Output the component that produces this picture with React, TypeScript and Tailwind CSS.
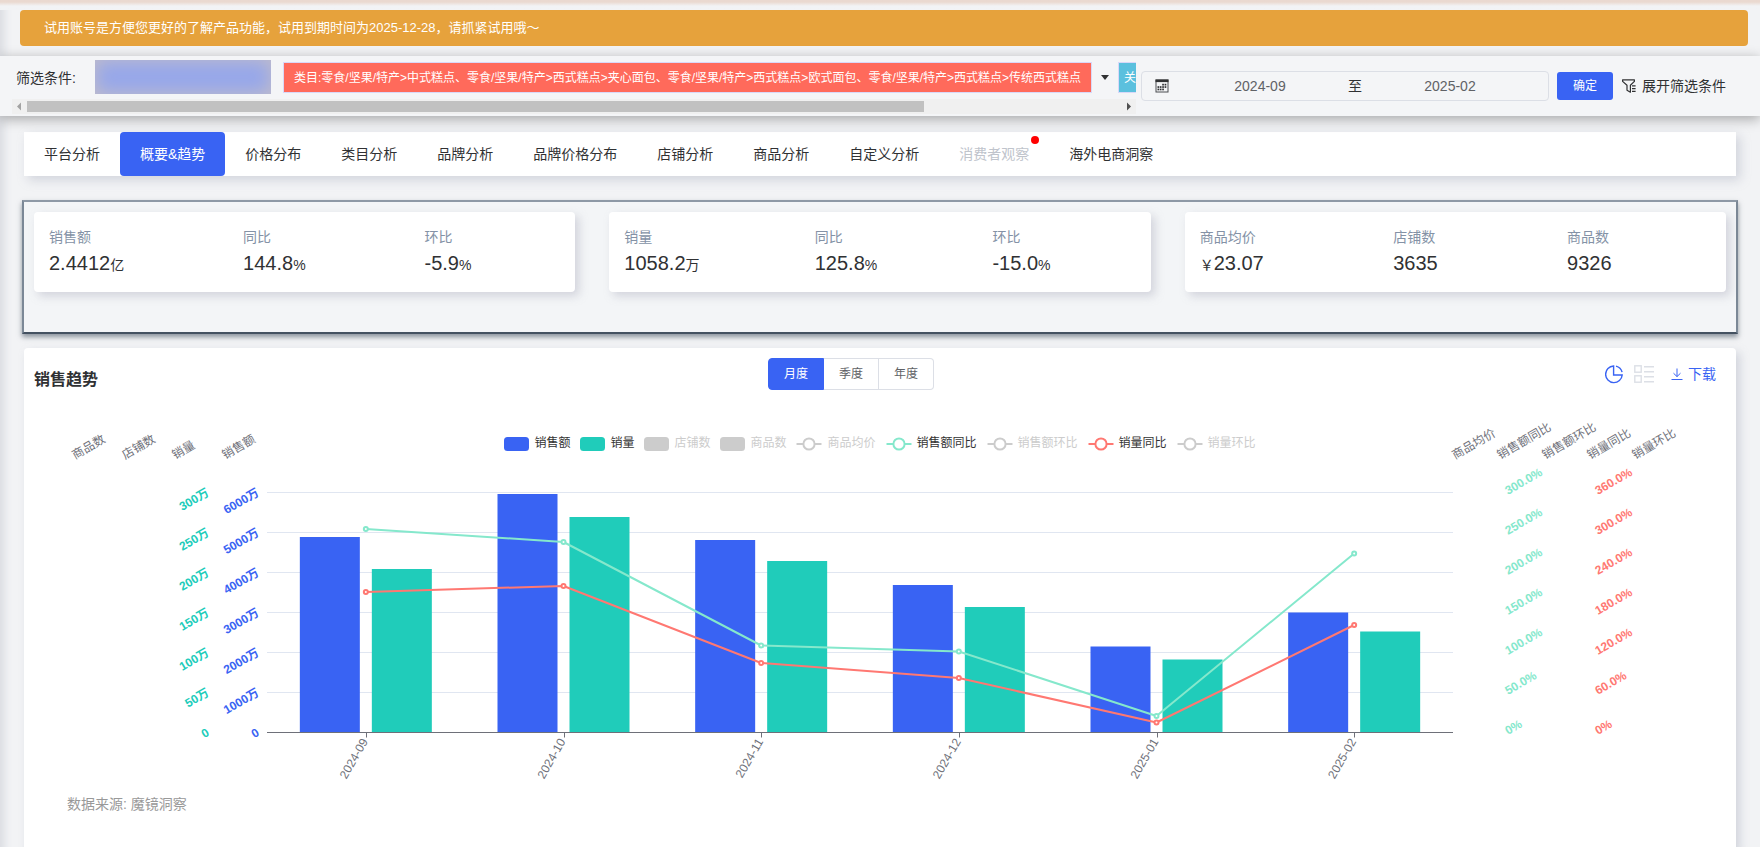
import React, { useState } from "react";

const BLUE = "#3963f3";
const TEAL = "#20ccba";
const MINT = "#85e8cc";
const CORAL = "#ff7872";

const tabs = [
  "平台分析",
  "概要&趋势",
  "价格分布",
  "类目分析",
  "品牌分析",
  "品牌价格分布",
  "店铺分析",
  "商品分析",
  "自定义分析",
  "消费者观察",
  "海外电商洞察",
];

type Metric = { label: string; prefix?: string; value: string; unit?: string };

const metricCards: Metric[][] = [
  [
    { label: "销售额", value: "2.4412", unit: "亿" },
    { label: "同比", value: "144.8", unit: "%" },
    { label: "环比", value: "-5.9", unit: "%" },
  ],
  [
    { label: "销量", value: "1058.2", unit: "万" },
    { label: "同比", value: "125.8", unit: "%" },
    { label: "环比", value: "-15.0", unit: "%" },
  ],
  [
    { label: "商品均价", prefix: "￥", value: "23.07" },
    { label: "店铺数", value: "3635" },
    { label: "商品数", value: "9326" },
  ],
];

const legend = [
  { name: "销售额", kind: "bar", color: BLUE, on: true },
  { name: "销量", kind: "bar", color: TEAL, on: true },
  { name: "店铺数", kind: "bar", color: "#ccc", on: false },
  { name: "商品数", kind: "bar", color: "#ccc", on: false },
  { name: "商品均价", kind: "line", color: "#ccc", on: false },
  { name: "销售额同比", kind: "line", color: MINT, on: true },
  { name: "销售额环比", kind: "line", color: "#ccc", on: false },
  { name: "销量同比", kind: "line", color: CORAL, on: true },
  { name: "销量环比", kind: "line", color: "#ccc", on: false },
];

function Banner() {
  return (
    <div className="mr-3 ml-5 flex h-9 items-center rounded bg-[#e6a23c] px-6 text-[13px] text-white">
      试用账号是方便您更好的了解产品功能，试用到期时间为2025-12-28，请抓紧试用哦～
    </div>
  );
}

function CalendarIcon() {
  return (
    <svg viewBox="0 0 14 14" className="h-[14px] w-[14px] shrink-0" aria-hidden="true">
      <rect x="1" y="1" width="12" height="12" fill="none" stroke="#4a4c50" strokeWidth="1" />
      <rect x="0.5" y="0.5" width="13" height="2.6" fill="#303133" />
      <g fill="#303133">
        <rect x="7.2" y="4.8" width="1.7" height="1.7" />
        <rect x="9.6" y="4.8" width="1.7" height="1.7" />
        <rect x="2.5" y="7.2" width="1.7" height="1.7" />
        <rect x="4.8" y="7.2" width="1.7" height="1.7" />
        <rect x="7.2" y="7.2" width="1.7" height="1.7" />
        <rect x="9.6" y="7.2" width="1.7" height="1.7" />
        <rect x="2.5" y="9.6" width="1.7" height="1.7" />
        <rect x="4.8" y="9.6" width="1.7" height="1.7" />
        <rect x="7.2" y="9.6" width="1.7" height="1.7" />
      </g>
    </svg>
  );
}

function FilterIcon() {
  return (
    <svg viewBox="0 0 14 14" className="h-[14px] w-[14px]" fill="none" stroke="#303133" strokeWidth="1.2" aria-hidden="true">
      <path d="M0.6 0.8H12.4V2.4L8.4 6.2V13.2L5 11.2V6.2L0.6 2.4Z" strokeLinejoin="round" />
      <path d="M10 6.8H13.6M10 9.6H13.6M10 12.4H13.6" />
    </svg>
  );
}

function FilterBar() {
  return (
    <div className="relative z-10 mt-[10px] flex h-[60px] items-center bg-[#f4f5f7] pr-[34px] shadow-[0_3px_12px_rgba(0,0,0,0.32)]">
      <div className="ml-3 h-full min-w-0 flex-1 overflow-hidden pt-1">
        <div className="flex h-[35px] items-center whitespace-nowrap">
          <span className="ml-1 w-[79px] shrink-0 text-sm text-[#303133]">筛选条件:</span>
          <div className="h-[34px] w-44 shrink-0 self-start bg-[#96a7eb] shadow-[inset_0_0_18px_1px_#c2bdc9]" />
          <div className="ml-3 flex h-[31px] shrink-0 items-center border border-[#d9d8f8] bg-[#ff6a5b] px-[10px] text-xs text-white">
            类目:零食/坚果/特产&gt;中式糕点、零食/坚果/特产&gt;西式糕点&gt;夹心面包、零食/坚果/特产&gt;西式糕点&gt;欧式面包、零食/坚果/特产&gt;西式糕点&gt;传统西式糕点
          </div>
          <button type="button" aria-label="展开类目" className="flex w-[26px] shrink-0 justify-center">
            <svg viewBox="0 0 8 5" className="h-[5px] w-2" aria-hidden="true">
              <path d="M0 0H8L4 5Z" fill="#303133" />
            </svg>
          </button>
          <div className="flex h-[31px] w-[120px] shrink-0 items-center border border-[#d9d8f8] bg-[#5bc0de] px-[5px] text-xs text-white">
            关
          </div>
        </div>
        <div className="mt-1 flex h-[15px] items-center bg-[#f0f0f0]">
          <svg viewBox="0 0 15 15" className="h-[15px] w-[15px] shrink-0" aria-hidden="true">
            <path d="M9 3.5V11.5L5 7.5Z" fill="#a3a3a3" />
          </svg>
          <div className="flex h-[11px] flex-1">
            <div className="w-[82%] bg-[#c1c1c1]" />
          </div>
          <svg viewBox="0 0 15 15" className="h-[15px] w-[15px] shrink-0" aria-hidden="true">
            <path d="M6 3.5V11.5L10 7.5Z" fill="#505050" />
          </svg>
        </div>
      </div>
      <div className="ml-[5px] flex h-[30px] w-[408px] items-center rounded border border-[#dcdfe6] pr-[15px] pl-[13px] text-sm">
        <CalendarIcon />
        <input
          aria-label="开始月份"
          defaultValue="2024-09"
          className="ml-2 h-7 min-w-0 flex-1 bg-transparent text-center text-[#606266] outline-none"
        />
        <span className="w-6 text-center text-[#303133]">至</span>
        <input
          aria-label="结束月份"
          defaultValue="2025-02"
          className="h-7 min-w-0 flex-1 bg-transparent text-center text-[#606266] outline-none"
        />
      </div>
      <button type="button" className="ml-2 h-7 w-14 rounded-[3px] bg-[#3963f3] text-xs text-white">
        确定
      </button>
      <button type="button" className="ml-[9px] flex items-center gap-[6px] text-sm text-[#303133]">
        <FilterIcon />
        展开筛选条件
      </button>
    </div>
  );
}

function TabBar() {
  const [active, setActive] = useState(1);
  return (
    <nav className="mx-6 mt-4 flex h-11 bg-white text-sm shadow-[4px_4px_10px_rgba(150,155,175,0.35)]">
      {tabs.map((name, i) => {
        const disabled = name === "消费者观察";
        const tone =
          i === active
            ? "rounded bg-[#3963f3] text-white"
            : disabled
              ? "text-[#c0c4cc]"
              : "text-[#303133]";
        return (
          <button
            key={name}
            type="button"
            disabled={disabled}
            onClick={() => setActive(i)}
            className={`relative px-5 whitespace-nowrap ${tone}`}
          >
            {name}
            {disabled && <span className="absolute top-1 right-[10px] h-2 w-2 rounded-full bg-[#ff0000]" />}
          </button>
        );
      })}
    </nav>
  );
}

function Metrics() {
  return (
    <section className="mx-[22px] mt-6 border-2 border-x-[#7b8896] border-t-[#8e99a6] border-b-[#445261] bg-[#f3f5f7] px-[10px] pt-[10px] pb-10 shadow-[0_3px_5px_rgba(68,82,97,0.6)]">
      <div className="grid grid-cols-3 gap-[34px]">
        {metricCards.map((card, i) => (
          <div key={i} className="flex h-20 rounded bg-white pt-4 shadow-[4px_4px_10px_rgba(150,150,170,0.35)]">
            {card.map((m) => (
              <div key={m.label} className="flex-auto px-[15px]">
                <div className="text-sm leading-[18px] text-[#8492a6]">{m.label}</div>
                <div className="mt-[3px] text-xl leading-7 whitespace-nowrap text-[#303133]">
                  {m.prefix && <span className="text-sm">{m.prefix}</span>}
                  {m.value}
                  {m.unit && <span className="text-sm">{m.unit}</span>}
                </div>
              </div>
            ))}
          </div>
        ))}
      </div>
    </section>
  );
}

function PeriodSwitch() {
  const [period, setPeriod] = useState("月度");
  return (
    <div className="flex h-8 text-xs">
      {["月度", "季度", "年度"].map((p, i) => (
        <button
          key={p}
          type="button"
          onClick={() => setPeriod(p)}
          className={`border-y px-[15px] ${p === period ? "border-[#3963f3] bg-[#3963f3] text-white" : "border-[#dcdfe6] text-[#606266]"} ${i === 0 ? "rounded-l border-l" : ""} ${i === 2 ? "rounded-r border-r" : "border-r"}`}
        >
          {p}
        </button>
      ))}
    </div>
  );
}

function ChartHeader() {
  return (
    <div className="grid grid-cols-3 pt-[10px]">
      <h2 className="pt-[10px] pl-[10px] text-base leading-6 font-bold text-[#303133]">销售趋势</h2>
      <div className="flex justify-center pr-[58px]">
        <PeriodSwitch />
      </div>
      <div className="flex h-8 items-center justify-end pr-5">
        <button type="button" aria-label="图表视图">
          <svg viewBox="0 0 18 19" className="h-[19px] w-[18px]" fill="none" stroke="#3963f3" strokeWidth="1.4" aria-hidden="true">
            <path d="M8.6 1A8.3 8.3 0 1 0 17.2 10H8.6Z" />
            <path d="M11 1.1A8.4 8.4 0 0 1 17.1 7.2" />
          </svg>
        </button>
        <button type="button" aria-label="列表视图" className="ml-[11px]">
          <svg viewBox="0 0 20 18" className="h-[18px] w-5" fill="none" stroke="#dcdfe6" strokeWidth="1.4" aria-hidden="true">
            <rect x="0.8" y="0.8" width="6.4" height="6.4" />
            <rect x="0.8" y="10.8" width="6.4" height="6.4" />
            <path d="M10 1.7H20M10 6.7H20M10 11.7H20M10 16.7H20" />
          </svg>
        </button>
        <button type="button" className="ml-[17px] flex items-center gap-[5px] text-sm text-[#3963f3]">
          <svg viewBox="0 0 12 12" className="h-3 w-3" fill="none" stroke="#3963f3" strokeWidth="1" aria-hidden="true">
            <path d="M6 0.5V8.5M2.5 5.2L6 8.6L9.5 5.2M0.5 11.5H11.5" />
          </svg>
          下载
        </button>
      </div>
    </div>
  );
}

function Legend() {
  return (
    <div className="absolute inset-x-0 top-[34px] flex justify-center gap-[10px] text-xs">
      {legend.map((item) => (
        <button
          key={item.name}
          type="button"
          className={`flex h-[18px] items-center gap-[5px] whitespace-nowrap ${item.on ? "text-[#333333]" : "text-[#cccccc]"}`}
        >
          {item.kind === "bar" ? (
            <svg viewBox="0 0 25 14" className="mt-[2px] h-[14px] w-[25px]" aria-hidden="true">
              <rect width="25" height="14" rx="3.5" fill={item.color} />
            </svg>
          ) : (
            <svg viewBox="0 0 26 14" className="mt-[2px] h-[14px] w-[26px]" stroke={item.color} strokeWidth="2" aria-hidden="true">
              <path d="M0.5 7H25.5" />
              <circle cx="13" cy="7" r="5.6" fill="#fff" />
            </svg>
          )}
          {item.name}
        </button>
      ))}
    </div>
  );
}

const months = ["2024-09", "2024-10", "2024-11", "2024-12", "2025-01", "2025-02"];
const LEFT = 243;
const RIGHT = 1429;
const TOP = 92.5;
const BASE = 332.5;
const BAND = (RIGHT - LEFT) / months.length;

/* bar heights and point heights above the base line */
const salesBars = [195.5, 238.5, 192.5, 147.5, 86, 120];
const volumeBars = [163.5, 215.5, 171.5, 125.5, 73, 101];
const salesYoY = [203.5, 190.5, 87, 81, 16.5, 179];
const volumeYoY = [140.5, 146.5, 69.5, 54.5, 10, 107.5];

const leftNames = ["商品数", "店铺数", "销量", "销售额"];
const rightNames = ["商品均价", "销售额同比", "销售额环比", "销量同比", "销量环比"];
const axisLabels = [
  { x: LEFT - 59, anchor: "end", color: TEAL, values: ["0", "50万", "100万", "150万", "200万", "250万", "300万"] },
  { x: LEFT - 9, anchor: "end", color: BLUE, values: ["0", "1000万", "2000万", "3000万", "4000万", "5000万", "6000万"] },
  { x: RIGHT + 53, anchor: "start", color: MINT, values: ["0%", "50.0%", "100.0%", "150.0%", "200.0%", "250.0%", "300.0%"] },
  { x: RIGHT + 143, anchor: "start", color: CORAL, values: ["0%", "60.0%", "120.0%", "180.0%", "240.0%", "300.0%", "360.0%"] },
] as const;

const center = (i: number) => LEFT + BAND * (i + 0.5);

function Series({ values, color }: { values: number[]; color: string }) {
  return (
    <g stroke={color} strokeWidth="2">
      <polyline fill="none" strokeLinejoin="bevel" points={values.map((v, i) => `${center(i)},${BASE - v}`).join(" ")} />
      {values.map((v, i) => (
        <circle key={i} cx={center(i)} cy={BASE - v} r="2" fill="#fff" />
      ))}
    </g>
  );
}

function Chart() {
  return (
    <svg viewBox="0 0 1712 390" className="block h-auto w-full text-xs" role="img" aria-label="销售趋势">
      {[0, 1, 2, 3, 4, 5].map((i) => (
        <path key={i} d={`M${LEFT} ${TOP + i * 40}H${RIGHT}`} stroke="#e0e6f1" />
      ))}
      {months.map((m, i) => (
        <g key={m}>
          <rect x={center(i) - 66} y={BASE - salesBars[i]} width="60" height={salesBars[i]} fill={BLUE} />
          <rect x={center(i) + 6} y={BASE - volumeBars[i]} width="60" height={volumeBars[i]} fill={TEAL} />
        </g>
      ))}
      <path d={`M${LEFT} ${BASE}H${RIGHT}`} stroke="#6e7079" />
      {months.map((m, i) => (
        <g key={m}>
          <path d={`M${Math.round(center(i)) + 0.5} ${BASE}v5`} stroke="#6e7079" />
          <text transform={`translate(${center(i) - 1} ${BASE + 7}) rotate(-60)`} dy="4" textAnchor="end" fill="#6e7079">
            {m}
          </text>
        </g>
      ))}
      <Series values={salesYoY} color={MINT} />
      <Series values={volumeYoY} color={CORAL} />
      {axisLabels.map((axis) => (
        <g key={axis.x} fill={axis.color} fontWeight="700" textAnchor={axis.anchor}>
          {axis.values.map((v, i) => (
            <text key={v} transform={`translate(${axis.x} ${BASE - 1 - i * 40}) rotate(-30)`} dy="4">
              {v}
            </text>
          ))}
        </g>
      ))}
      <g fill="#6e7079">
        {leftNames.map((n, i) => (
          <text key={n} transform={`translate(${49 + i * 50} 56) rotate(-30)`} dy="4">
            {n}
          </text>
        ))}
        {rightNames.map((n, i) => (
          <text key={n} transform={`translate(${RIGHT + i * 45} 56) rotate(-30)`} dy="4">
            {n}
          </text>
        ))}
      </g>
    </svg>
  );
}

export default function App() {
  return (
    <div className="min-h-screen bg-[#f2f3f5] font-['Liberation_Sans','Noto_Sans_CJK_SC',sans-serif] shadow-[inset_10px_0_8px_-6px_#d9dbe1]">
      <div className="h-[10px] bg-linear-to-b from-[#ead9d0] from-20% to-[#f2f3f5] to-60%" />
      <Banner />
      <FilterBar />
      <TabBar />
      <Metrics />
      <section className="mx-6 mt-[14px] rounded bg-white pb-[33px] shadow-[4px_4px_10px_rgba(150,155,175,0.35)]">
        <ChartHeader />
        <div className="relative mt-2">
          <Chart />
          <Legend />
        </div>
        <p className="pl-[43px] text-sm leading-7 text-[#999999]">数据来源: 魔镜洞察</p>
      </section>
    </div>
  );
}
